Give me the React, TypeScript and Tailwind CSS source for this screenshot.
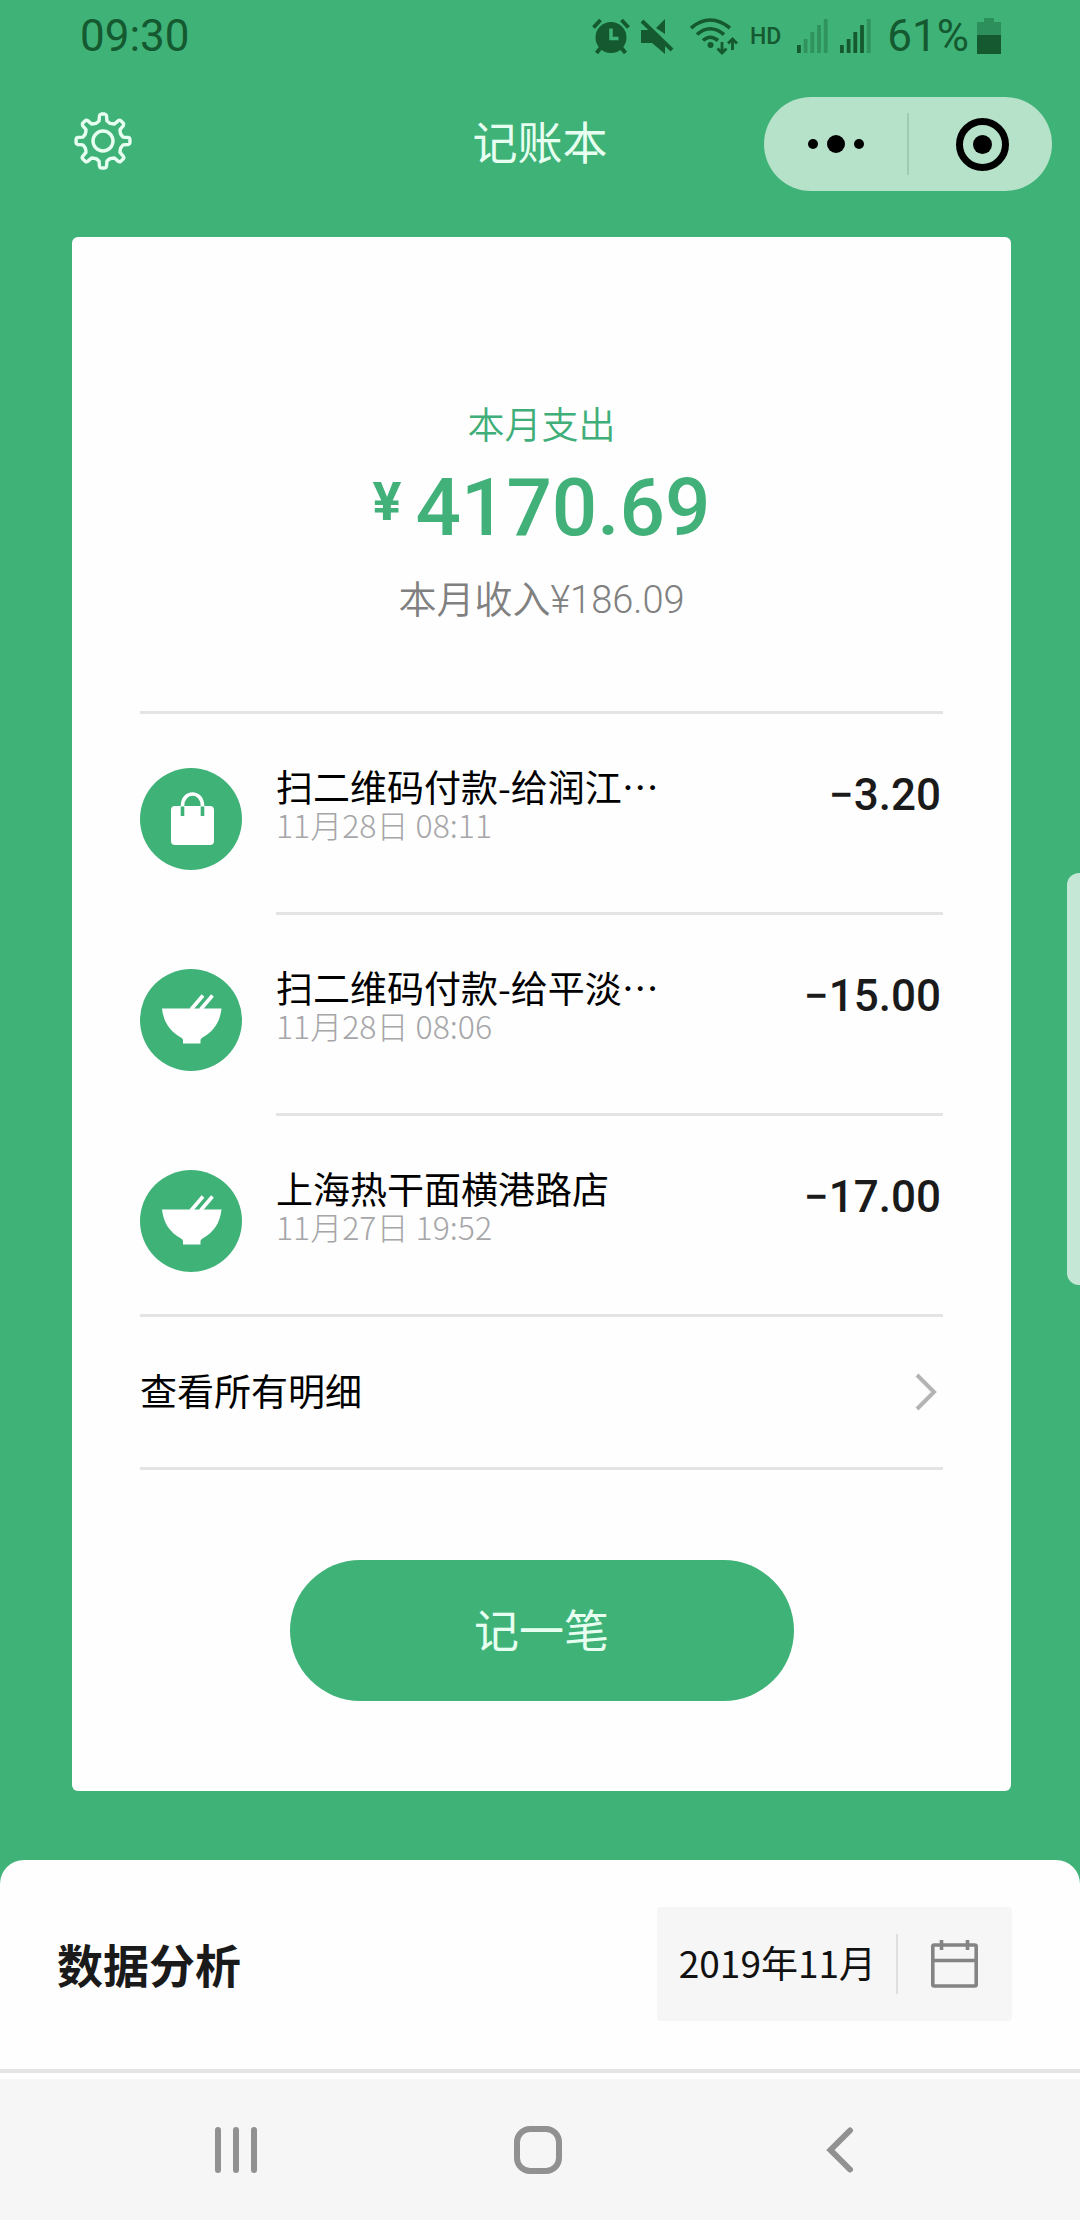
import React from "react";

const cjk = "font-['Noto_Sans_CJK_SC',sans-serif]";
const latin = "font-[Roboto,'Noto_Sans_CJK_SC',sans-serif]";

function polar(radius: number, degrees: number) {
  const t = (degrees * Math.PI) / 180;
  return `${(radius * Math.cos(t)).toFixed(2)} ${(radius * Math.sin(t)).toFixed(2)}`;
}

function gearPath() {
  let d = "";
  for (let i = 0; i < 8; i++) {
    const a = i * 45;
    d += `${i === 0 ? "M" : "L"}${polar(20.5, a - 11)} L${polar(25.5, a - 8)} Q${polar(27, a - 7)} ${polar(27, a - 4)} L${polar(27, a + 4)} Q${polar(27, a + 7)} ${polar(25.5, a + 8)} L${polar(20.5, a + 11)} Q${polar(19.5, a + 16)} ${polar(19, a + 22.5)} Q${polar(19.5, a + 29)} ${polar(20.5, a + 34)} `;
  }
  return d + "Z";
}

function GearIcon() {
  return (
    <svg viewBox="-29 -29 58 58" className="size-[58px]" fill="none" stroke="currentColor" strokeWidth="3.4" strokeLinejoin="round" aria-hidden="true">
      <path d={gearPath()} />
      <circle r="10" />
    </svg>
  );
}

function AlarmIcon() {
  return (
    <svg viewBox="0 0 38 36" className="h-9 w-[38px]" aria-hidden="true">
      <circle cx="19" cy="19.5" r="15.5" fill="currentColor" />
      <g stroke="currentColor" strokeWidth="4" fill="none">
        <path d="M1.500 9.500 8.500 2" />
        <path d="M36.500 9.500 29.500 2" />
        <path d="M8.500 30 4.500 35" />
        <path d="M29.500 30 33.500 35" />
      </g>
      <path d="M19 10.500v10h7.500" stroke="#3fb278" strokeWidth="3.500" fill="none" />
    </svg>
  );
}

function MuteIcon() {
  return (
    <svg viewBox="0 0 34 36" className="h-9 w-[34px]" aria-hidden="true">
      <path d="M25 1v15L16 10Z" fill="currentColor" />
      <path d="M1 12h8l16 14v10L12 25H1Z" fill="currentColor" />
      <path d="M2 3 32 32" stroke="currentColor" strokeWidth="4" />
    </svg>
  );
}

function WifiIcon() {
  return (
    <svg viewBox="0 0 48 37" className="h-[37px] w-12" fill="none" stroke="currentColor" aria-hidden="true">
      <path d="M1 10Q20 -6 40 10" strokeWidth="3.600" />
      <path d="M7 16.500Q20 5 34 16.500" strokeWidth="3.600" />
      <path d="M13 22.500Q20 16 28 22.500" strokeWidth="3.600" />
      <circle cx="20.500" cy="27" r="3" fill="currentColor" stroke="none" />
      <g strokeWidth="2.800">
        <path d="M32 24v11M27.500 30.500 32 35l4.500-4.500" />
        <path d="M42.500 32V21M38 25.500l4.500-4.500 4.500 4.500" />
      </g>
    </svg>
  );
}

function SignalIcon({ bars }: { bars: number }) {
  const heights = [8, 14, 21, 28, 34];
  return (
    <svg viewBox="0 0 31 34" className="h-[34px] w-[31px]" fill="currentColor" aria-hidden="true">
      {heights.map((h, i) => (
        <rect key={h} x={i * 6.7} y={34 - h} width="3.800" height={h} opacity={i < bars ? 1 : 0.35} />
      ))}
    </svg>
  );
}

function BatteryIcon() {
  return (
    <svg viewBox="0 0 24 36" className="h-9 w-6" fill="currentColor" aria-hidden="true">
      <path d="M7 0h10v4h7v13H0V4h7Z" opacity="0.400" />
      <rect y="17" width="24" height="19" />
    </svg>
  );
}

function BagIcon() {
  return (
    <svg viewBox="0 0 102 102" className="size-[102px] shrink-0" aria-hidden="true">
      <circle cx="51" cy="51" r="51" fill="#3fb278" />
      <rect x="31" y="38" width="43" height="39" rx="4" fill="#fff" />
      <path d="M42.500 38C42.500 22 62.500 22 62.500 38" fill="none" stroke="#fff" strokeWidth="3.600" />
      <path d="M42.500 38.500v9.500M62.500 38.500v9.500" stroke="#3fb278" strokeWidth="3.600" />
    </svg>
  );
}

function BowlIcon() {
  return (
    <svg viewBox="0 0 102 102" className="size-[102px] shrink-0" aria-hidden="true">
      <circle cx="51" cy="51" r="51" fill="#3fb278" />
      <path d="M22 39.500H81.500C80 53 74 62 62.500 68.500Q60.500 69.500 60.500 71V74.500H43V71Q43 69.500 41 68.500C29.500 62 23.500 53 22 39.500Z" fill="#fff" />
      <path d="M51 40.500 63 26.500M60.500 40.500 72.500 26.500" stroke="#fff" strokeWidth="3.600" />
    </svg>
  );
}

type Entry = { id: number; icon: "bag" | "bowl"; title: string; time: string; amount: string };

const entries: Entry[] = [
  { id: 1, icon: "bag", title: "扫二维码付款-给润江…", time: "11月28日 08:11", amount: "−3.20" },
  { id: 2, icon: "bowl", title: "扫二维码付款-给平淡…", time: "11月28日 08:06", amount: "−15.00" },
  { id: 3, icon: "bowl", title: "上海热干面横港路店", time: "11月27日 19:52", amount: "−17.00" },
];

function StatusBar() {
  return (
    <div className={`flex h-[72px] items-center justify-between pr-[79px] pl-20 text-[#14592f] ${latin}`}>
      <time className="text-[44px] leading-none">09:30</time>
      <div className="flex items-center">
        <AlarmIcon />
        <span className="ml-2.5"><MuteIcon /></span>
        <span className="ml-4"><WifiIcon /></span>
        <span className="ml-3 text-[23px] leading-none font-medium">HD</span>
        <span className="ml-4"><SignalIcon bars={1} /></span>
        <span className="ml-3"><SignalIcon bars={4} /></span>
        <span className="ml-4 text-[44px] leading-none">61%</span>
        <span className="ml-2"><BatteryIcon /></span>
      </div>
    </div>
  );
}

function Header() {
  return (
    <header className="grid h-36 grid-cols-[1fr_auto_1fr] items-center pr-7 pl-[74px] text-[#e6fff0]">
      <button type="button" aria-label="设置" className="justify-self-start pb-1.5">
        <GearIcon />
      </button>
      <h1 className="mr-[46px] pb-2 text-[45px] leading-none">记账本</h1>
      <div className="flex h-[94px] w-72 items-center justify-self-end rounded-full bg-[#b5e2c9] text-black">
        <button type="button" aria-label="更多" className="flex h-full basis-1/2 items-center justify-center gap-[9px]">
          <span className="size-2.5 rounded-full bg-black" />
          <span className="size-[18px] rounded-full bg-black" />
          <span className="size-2.5 rounded-full bg-black" />
        </button>
        <span className="h-[62px] w-0.5 bg-[#9cccb1]" />
        <button type="button" aria-label="关闭" className="flex h-full basis-1/2 items-center justify-center pl-1">
          <span className="flex size-[53px] items-center justify-center rounded-full border-7 border-black">
            <span className="size-[19px] rounded-full bg-black" />
          </span>
        </button>
      </div>
    </header>
  );
}

function EntryRow({ entry, last }: { entry: Entry; last: boolean }) {
  return (
    <li className={last ? "flex gap-[34px] border-b-3 border-[#e4e4e4]" : "flex gap-[34px]"}>
      <div className="pt-[54px]">{entry.icon === "bag" ? <BagIcon /> : <BowlIcon />}</div>
      <div className={last ? "flex h-[198px] flex-1 justify-between pt-13" : "flex h-[201px] flex-1 justify-between border-b-3 border-[#e4e4e4] pt-13"}>
        <div>
          <p className="text-[37px] leading-10 text-black">{entry.title}</p>
          <p className="text-[32px] leading-9 font-light text-[#a6a6a9]">{entry.time}</p>
        </div>
        <p className={`pr-0.5 text-[44px] leading-[58px] font-medium text-[#1a1a1a] ${latin}`}>{entry.amount}</p>
      </div>
    </li>
  );
}

function SummaryCard() {
  return (
    <main className="mt-[21px] mr-[69px] ml-[72px] flex flex-col rounded-md bg-[#fefefe] px-[68px] pt-40 pb-[90px]">
      <section className="flex flex-col items-center">
        <h2 className="text-[37px] leading-[52px] font-[350] text-[#3fae78]">本月支出</h2>
        <p className={`mt-[17px] flex gap-3.5 font-medium text-[#42b079] ${latin}`}>
          <span className="text-[54px] leading-[72px] font-bold">¥</span>
          <span className="text-[80px] leading-[84px]">4170.69</span>
        </p>
        <p className={`mt-6 text-[38px] leading-[52px] font-[350] text-[#808080] ${latin}`}>本月收入¥186.09</p>
      </section>
      <ul className="mt-[85px] border-t-3 border-[#e4e4e4]">
        {entries.map((entry, i) => (
          <EntryRow key={entry.id} entry={entry} last={i === entries.length - 1} />
        ))}
      </ul>
      <a href="#all" className="flex h-[153px] items-center justify-between border-b-3 border-[#e4e4e4] pr-1.5 text-black">
        <span className="pb-1 text-[37px] leading-none">查看所有明细</span>
        <svg viewBox="0 0 22 38" className="h-[38px] w-[22px]" fill="none" stroke="#b4b4b4" strokeWidth="4" aria-hidden="true">
          <path d="M2 2 19 19 2 36" />
        </svg>
      </a>
      <button type="button" className="mt-[90px] h-[141px] w-[504px] max-w-full self-center rounded-full bg-[#3fb278] pb-1 text-[45px] leading-none text-[#e6fff0]">
        记一笔
      </button>
    </main>
  );
}

function AnalysisSheet() {
  return (
    <section className="mt-[69px] flex items-center justify-between rounded-t-3xl border-b-4 border-[#e4e4e4] bg-[#fefefe] pt-[47px] pr-17 pb-12 pl-[57px]">
      <h2 className="pb-0.5 text-[46px] leading-none font-bold text-[#1a1a1a]">数据分析</h2>
      <button type="button" aria-label="选择月份 2019年11月" className="flex h-[114px] items-center rounded-sm bg-[#f6f6f6] pr-[34px] pl-[22px]">
        <span className="pb-1 text-[37px] leading-none text-[#111]">2019年11月</span>
        <span className="ml-5 h-15 w-0.5 bg-[#dedede]" />
        <svg viewBox="0 0 47 48" className="ml-[33px] h-12 w-[47px]" fill="none" stroke="#848484" strokeWidth="3.600" aria-hidden="true">
          <rect x="1.800" y="5" width="43.400" height="41" rx="1.500" />
          <path d="M2 20.500H45M10.500 0V10M36.500 0V10" />
        </svg>
      </button>
    </section>
  );
}

function SystemNav() {
  return (
    <nav className="grid flex-1 grid-cols-3 items-center border-t-6 border-[#fefefe] bg-[#f6f6f6] py-11 pr-[89px] pl-[85px] text-[#919191]">
      <button type="button" aria-label="最近任务" className="flex justify-center gap-3">
        <span className="h-[46px] w-1.5 rounded-full bg-[#919191]" />
        <span className="h-[46px] w-1.5 rounded-full bg-[#919191]" />
        <span className="h-[46px] w-1.5 rounded-full bg-[#919191]" />
      </button>
      <button type="button" aria-label="主屏幕" className="flex justify-center">
        <span className="size-12 rounded-2xl border-6 border-[#919191]" />
      </button>
      <button type="button" aria-label="返回" className="flex justify-center">
        <svg viewBox="0 0 28 48" className="h-12 w-7" fill="none" stroke="currentColor" strokeWidth="6" strokeLinecap="round" aria-hidden="true">
          <path d="M24 4.500 4.500 24 24 43.500" />
        </svg>
      </button>
    </nav>
  );
}

export default function App() {
  return (
    <div lang="zh-CN" className={`relative flex min-h-screen flex-col overflow-hidden bg-[#3fb278] ${cjk}`}>
      <StatusBar />
      <Header />
      <SummaryCard />
      <AnalysisSheet />
      <SystemNav />
      <div className="absolute top-[873px] right-0 h-[412px] w-[13px] rounded-l-xl bg-[#c5e8d6]" />
    </div>
  );
}
